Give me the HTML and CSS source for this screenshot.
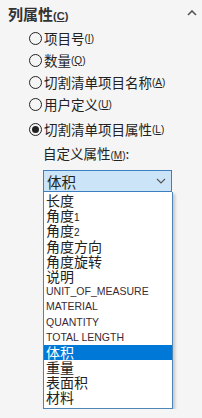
FILE: index.html
```html
<!DOCTYPE html>
<html lang="zh-CN">
<head>
  <meta charset="UTF-8">
  <title>列属性</title>
  <meta name="viewport" content="width=device-width, initial-scale=1">
  <link rel="stylesheet" href="styles.css">
</head>
<body>
  <div class="header-row">
    <span class="title">列属性<span class="key">(<u>C</u>)</span></span>
    <svg class="collapse" width="10" height="6" viewBox="0 0 10 6">
      <path d="M1 5 L5 1 L9 5" fill="none" stroke="#555" stroke-width="1.6"/>
    </svg>
  </div>
  <div class="radio-list">
    <label class="radio-row"><span class="radio"></span>项目号<span class="key">(<u>I</u>)</span></label>
    <label class="radio-row"><span class="radio"></span>数量<span class="key">(<u>Q</u>)</span></label>
    <label class="radio-row"><span class="radio"></span>切割清单项目名称<span class="key">(<u>A</u>)</span></label>
    <label class="radio-row"><span class="radio"></span>用户定义<span class="key">(<u>U</u>)</span></label>
    <label class="radio-row checked"><span class="radio"></span>切割清单项目属性<span class="key">(<u>L</u>)</span></label>
  </div>
  <div class="custom">
    <div class="custom-label">自定义属性<span class="key">(<u>M</u>)</span>:</div>
    <div class="select">
      <span>体积</span>
      <svg width="10" height="6" viewBox="0 0 10 6">
        <path d="M1 1 L5 5 L9 1" fill="none" stroke="#555" stroke-width="1.1"/>
      </svg>
    </div>
    <ul class="list">
      <li>长度</li>
      <li>角度<span class="num">1</span></li>
      <li>角度<span class="num">2</span></li>
      <li>角度方向</li>
      <li>角度旋转</li>
      <li>说明</li>
      <li class="latin">UNIT_OF_MEASURE</li>
      <li class="latin">MATERIAL</li>
      <li class="latin">QUANTITY</li>
      <li class="latin">TOTAL LENGTH</li>
      <li class="active">体积</li>
      <li>重量</li>
      <li>表面积</li>
      <li>材料</li>
    </ul>
  </div>
</body>
</html>
```

FILE: styles.css
```css
body {
  margin: 0;
  background: #f5f5f5;
  color: #222;
  font-family: "Noto Sans CJK SC", "Liberation Sans", sans-serif;
  font-size: 13.5px;
}
.header-row {
  display: flex;
  align-items: center;
  justify-content: space-between;
  height: 27px;
  padding: 0 5px 0 8px;
}
.title {
  font-size: 15px;
  font-weight: bold;
  color: #333;
}
.collapse {
  margin-top: -2px;
}
.key {
  font-size: 10px;
  font-family: "Liberation Sans", sans-serif;
}
.title .key {
  font-size: 11px;
}
.radio-list {
  padding-left: 29px;
}
.radio-row {
  display: flex;
  align-items: center;
  height: 22px;
}
.radio-row.checked {
  margin-top: 3px;
}
.radio {
  box-sizing: border-box;
  width: 13px;
  height: 13px;
  border: 1px solid #222;
  border-radius: 50%;
  margin-right: 2px;
  display: flex;
  align-items: center;
  justify-content: center;
}
.checked .radio::after {
  content: "";
  width: 7px;
  height: 7px;
  border-radius: 50%;
  background: #222;
}
.custom {
  padding-left: 43px;
}
.custom-label {
  height: 26px;
  line-height: 26px;
  margin-bottom: 4px;
}
.select {
  box-sizing: border-box;
  width: 129px;
  height: 22px;
  border: 1px solid #3d7fc1;
  background: #cce4f7;
  display: flex;
  align-items: center;
  justify-content: space-between;
  padding: 0 5px 0 3px;
  font-size: 14.5px;
}
.list {
  list-style: none;
  margin: 0;
  padding: 1px 0 2px;
  width: 130px;
  box-sizing: border-box;
  background: #fff;
  border: 1px solid #4f86b8;
  border-top: none;
  box-shadow: 2px 2px 3px rgba(0, 0, 0, 0.2);
}
.list li {
  height: 15.2px;
  line-height: 15.2px;
  padding-left: 2px;
  font-size: 14px;
  white-space: nowrap;
}
.list .num {
  font-size: 10px;
  font-family: "Liberation Sans", sans-serif;
}
.list .latin {
  font-family: "Liberation Sans", sans-serif;
  font-size: 10.5px;
  color: #3a2a34;
}
.list .active {
  background: #0078d7;
  color: #fff;
}
```
